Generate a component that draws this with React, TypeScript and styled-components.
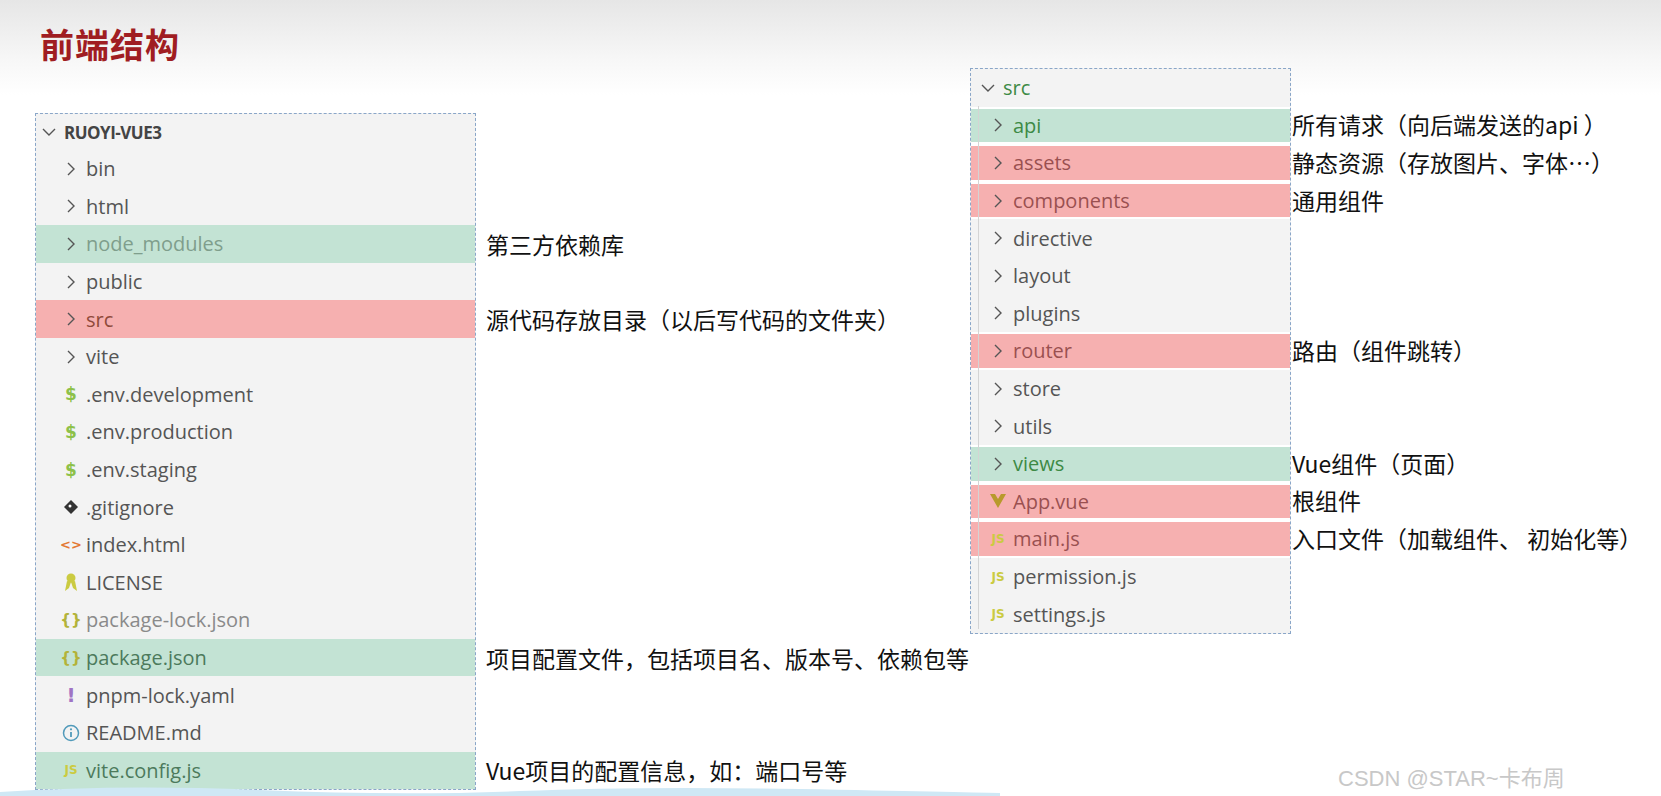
import React from "react";
import styled, { createGlobalStyle } from "styled-components";

const Global = createGlobalStyle`
  html, body { margin: 0; padding: 0; background: #fff; }
  body { font-family: "Open Sans", "Noto Sans", "Noto Sans CJK SC", sans-serif; }
`;

const Page = styled.div`
  width: 1661px; height: 796px; position: relative; overflow: hidden;
  background: linear-gradient(#e6e6e6 0px, #f7f7f7 60px, #ffffff 95px);
`;
const Header = styled.div`
  padding: 24px 0 0 40px; height: 44px;
`;
const Title = styled.h1`
  margin: 0; font: bold 34px/40px "Noto Sans CJK SC", sans-serif; color: #a01d22; letter-spacing: 1px;
`;
const Content = styled.div`display: flex; align-items: flex-start; padding-left: 35px;`;
const Group = styled.div<{ $top: number }>`display: flex; margin-top: ${p => p.$top}px;`;
const Panel = styled.div<{ $w: number }>`
  width: ${p => p.$w}px; background: #f3f3f3; border: 1px dashed #8aa6c8; box-sizing: border-box; position: relative;
`;
const Guide = styled.div`position: absolute; left: 7px; top: 37px; bottom: 4px; width: 1px; background: #d4d4d4; z-index: 1;`;
const Row = styled.div<{ $hl?: string; $indent: number; $inset?: boolean; $h?: number }>`
  height: ${p => p.$h ?? 37.6}px; box-sizing: border-box; display: flex; align-items: center;
  padding-left: ${p => p.$indent}px; position: relative;
  background: ${p => p.$hl === "g" ? "#c3e3d4" : p.$hl === "r" ? "#f6b0b0" : "transparent"};
  background-clip: padding-box;
  ${p => p.$inset ? `border-top: 2px solid ${p.$hl ? "#fff" : "transparent"}; border-bottom: 2px solid ${p.$hl ? "#fff" : "transparent"};` : ""}
`;
const Icon = styled.span`width: 26px; display: inline-flex; justify-content: center; align-items: center; margin-right: 2px;`;
const Name = styled.span<{ $c: string; $b?: boolean }>`
  font-size: ${p => p.$b ? 17 : 20}px; font-weight: ${p => p.$b ? 700 : 400}; color: ${p => p.$c};
  font-family: "Open Sans", sans-serif;
  letter-spacing: ${p => p.$b ? "-0.5px" : "0"};
`;
const Notes = styled.div<{ $w: number; $pad: number }>`width: ${p => p.$w}px; display: flex; flex-direction: column; padding-left: ${p => p.$pad}px; box-sizing: border-box;`;
const Note = styled.div<{ $h?: number }>`
  height: ${p => p.$h ?? 37.6}px; display: flex; align-items: center;
  font: 23px "Noto Sans CJK SC", sans-serif; color: #111; white-space: nowrap;
`;
const Watermark = styled.div`
  position: absolute; left: 1338px; top: 760px; font: 22px "Liberation Sans", "Noto Sans CJK SC", sans-serif; color: #c8c8c8;
`;
const Wave = styled.svg`position: absolute; left: 0; bottom: 0;`;

const Chev = ({ down }: { down?: boolean }) => (
  <svg width="16" height="16" viewBox="0 0 16 16">
    <path d={down ? "M2 5 L8 11 L14 5" : "M5 2 L11 8 L5 14"} fill="none" stroke="#555" strokeWidth="1.4" />
  </svg>
);
const Txt = ({ c, t, s = 18, w = 700 }: { c: string; t: string; s?: number; w?: number }) => (
  <span style={{ color: c, fontSize: s, fontWeight: w, fontFamily: '"DejaVu Sans", sans-serif' }}>{t}</span>
);

type Kind = "dir" | "env" | "git" | "html" | "lic" | "json" | "yaml" | "info" | "js" | "vue";
const iconFor = (k: Kind) => {
  switch (k) {
    case "dir": return <Chev />;
    case "env": return <Txt c="#8dc149" t="$" s={17} />;
    case "git": return <svg width="16" height="16" viewBox="0 0 16 16"><path d="M8 1 L15 8 L8 15 L1 8Z" fill="#333" /><circle cx="7" cy="7" r="1.5" fill="#fff" /></svg>;
    case "html": return <Txt c="#e37933" t="<>" s={13} />;
    case "lic": return <svg width="14" height="20" viewBox="0 0 14 20"><circle cx="7" cy="6" r="4.5" fill="#cbcb41" /><path d="M3 9 L1 19 L5 16 L7 10Z M11 9 L13 19 L9 16 L7 10Z" fill="#cbcb41" /></svg>;
    case "json": return <Txt c="#b3b33a" t="{}" s={15} />;
    case "yaml": return <Txt c="#a074c4" t="!" s={20} />;
    case "info": return <svg width="18" height="18" viewBox="0 0 18 18"><circle cx="9" cy="9" r="7.5" fill="none" stroke="#519aba" strokeWidth="1.5" /><path d="M9 8v5" stroke="#519aba" strokeWidth="1.8" /><circle cx="9" cy="5.3" r="1.1" fill="#519aba" /></svg>;
    case "js": return <Txt c="#cbcb41" t="JS" s={12} />;
    case "vue": return <svg width="18" height="18" viewBox="0 0 18 18"><path d="M1 2 H6 L9 7 L12 2 H17 L9 16Z" fill="#b89a2c" /></svg>;
  }
};

type Item = { n: string; k: Kind; hl?: string; c?: string; note?: string };
const left: Item[] = [
  { n: "bin", k: "dir" }, { n: "html", k: "dir" },
  { n: "node_modules", k: "dir", hl: "g", c: "#7f9e8c", note: "第三方依赖库" },
  { n: "public", k: "dir" },
  { n: "src", k: "dir", hl: "r", c: "#8f4a3a", note: "源代码存放目录（以后写代码的文件夹）" },
  { n: "vite", k: "dir" }, { n: ".env.development", k: "env" }, { n: ".env.production", k: "env" },
  { n: ".env.staging", k: "env" }, { n: ".gitignore", k: "git" }, { n: "index.html", k: "html" },
  { n: "LICENSE", k: "lic" }, { n: "package-lock.json", k: "json", c: "#8a8a8a" },
  { n: "package.json", k: "json", hl: "g", c: "#4c7a5c", note: "项目配置文件，包括项目名、版本号、依赖包等" },
  { n: "pnpm-lock.yaml", k: "yaml" }, { n: "README.md", k: "info" },
  { n: "vite.config.js", k: "js", hl: "g", c: "#4c7a5c", note: "Vue项目的配置信息，如：端口号等" },
];
const right: Item[] = [
  { n: "api", k: "dir", hl: "g", c: "#3d8a45", note: "所有请求（向后端发送的api ）" },
  { n: "assets", k: "dir", hl: "r", c: "#9a5050", note: "静态资源（存放图片、字体…）" },
  { n: "components", k: "dir", hl: "r", c: "#9a5050", note: "通用组件" },
  { n: "directive", k: "dir" }, { n: "layout", k: "dir" }, { n: "plugins", k: "dir" },
  { n: "router", k: "dir", hl: "r", c: "#9a5050", note: "路由（组件跳转）" },
  { n: "store", k: "dir" }, { n: "utils", k: "dir" },
  { n: "views", k: "dir", hl: "g", c: "#3d8a45", note: "Vue组件（页面）" },
  { n: "App.vue", k: "vue", hl: "r", c: "#9a5050", note: "根组件" },
  { n: "main.js", k: "js", hl: "r", c: "#9a5050", note: "入口文件（加载组件、 初始化等）" },
  { n: "permission.js", k: "js" }, { n: "settings.js", k: "js" },
];

export default function App() {
  return (
    <Page>
      <Global />
      <Header><Title>前端结构</Title></Header>
      <Content>
        <Group $top={45}>
          <Panel $w={441}>
            <Row $indent={0} $h={36}><Icon><Chev down /></Icon><Name $c="#444" $b>RUOYI-VUE3</Name></Row>
            {left.map(it => (
              <Row key={it.n} $hl={it.hl} $indent={22}>
                <Icon>{iconFor(it.k)}</Icon><Name $c={it.c ?? "#555"}>{it.n}</Name>
              </Row>
            ))}
          </Panel>
          <Notes $w={494} $pad={10}>
            <Note $h={37} />
            {left.map(it => <Note key={it.n}>{it.note ?? ""}</Note>)}
          </Notes>
        </Group>
        <Group $top={0}>
          <Panel $w={321}>
            <Guide />
            <Row $indent={4} $h={37.6}><Icon><Chev down /></Icon><Name $c="#3d8a45">src</Name></Row>
            {right.map(it => (
              <Row key={it.n} $hl={it.hl} $indent={14} $inset>
                <Icon>{iconFor(it.k)}</Icon><Name $c={it.c ?? "#555"}>{it.n}</Name>
              </Row>
            ))}
          </Panel>
          <Notes $w={380} $pad={1}>
            <Note />
            {right.map(it => <Note key={it.n}>{it.note ?? ""}</Note>)}
          </Notes>
        </Group>
      </Content>
      <Wave width="1000" height="12" viewBox="0 0 1000 12">
        <path d="M0 8 Q120 0 260 6 T520 7 T800 5 T1000 9 V12 H0Z" fill="#cfe8f5" />
      </Wave>
      <Watermark>CSDN @STAR~卡布周</Watermark>
    </Page>
  );
}
